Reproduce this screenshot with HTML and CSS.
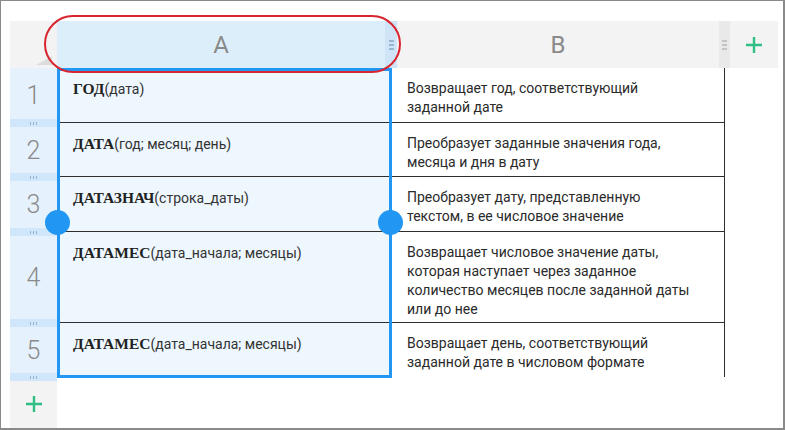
FILE: index.html
```html
<!DOCTYPE html>
<html lang="ru">
<head>
<meta charset="utf-8">
<title>Таблица</title>
<link rel="stylesheet" href="styles.css">
</head>
<body>
<div class="frame">
  <div class="sheet">
    <div class="header">
      <div class="corner"><span class="tri"></span></div>
      <div class="colhead sel">
        <span class="label">A</span>
        <span class="handle"><i></i><i></i><i></i></span>
      </div>
      <div class="colhead">
        <span class="label">B</span>
        <span class="handle"><i></i><i></i><i></i></span>
      </div>
      <div class="addcol">
        <svg class="plus" width="18" height="18" viewBox="0 0 18 18"><path d="M9 1v16M1 9h16"/></svg>
      </div>
    </div>
    <div class="body">
      <div class="rowheads">
        <div class="num n1">1</div>
        <div class="band"><i></i><i></i><i></i></div>
        <div class="num n2">2</div>
        <div class="band"><i></i><i></i><i></i></div>
        <div class="num n3">3</div>
        <div class="band"><i></i><i></i><i></i></div>
        <div class="num n4">4</div>
        <div class="band"><i></i><i></i><i></i></div>
        <div class="num n5">5</div>
        <div class="band"><i></i><i></i><i></i></div>
        <div class="addrow">
          <svg class="plus" width="18" height="18" viewBox="0 0 18 18"><path d="M9 1v16M1 9h16"/></svg>
        </div>
      </div>
      <div class="grid">
        <div class="row r1">
          <div class="cell a"><b>ГОД</b>(дата)</div>
          <div class="cell b">Возвращает год, соответствующий<br>заданной дате</div>
        </div>
        <div class="row r2">
          <div class="cell a"><b>ДАТА</b>(год; месяц; день)</div>
          <div class="cell b">Преобразует заданные значения года,<br>месяца и дня в дату</div>
        </div>
        <div class="row r3">
          <div class="cell a"><b>ДАТАЗНАЧ</b>(строка_даты)</div>
          <div class="cell b">Преобразует дату, представленную<br>текстом, в ее числовое значение</div>
        </div>
        <div class="row r4">
          <div class="cell a"><b>ДАТАМЕС</b>(дата_начала; месяцы)</div>
          <div class="cell b">Возвращает числовое значение даты,<br>которая наступает через заданное<br>количество месяцев после заданной даты<br>или до нее</div>
        </div>
        <div class="row r5">
          <div class="cell a"><b>ДАТАМЕС</b>(дата_начала; месяцы)</div>
          <div class="cell b">Возвращает день, соответствующий<br>заданной дате в числовом формате</div>
        </div>
      </div>
    </div>
    <div class="selection"></div>
    <span class="knob left"></span>
    <span class="knob right"></span>
    <div class="callout"></div>
  </div>
</div>
</body>
</html>
```
FILE: styles.css
```css
* { box-sizing: border-box; }
html, body { margin: 0; padding: 0; background: #fff; }
.frame {
  width: 785px;
  height: 430px;
  border: 1px solid #8a8a8a;
  border-right-width: 2px;
  border-bottom-width: 2px;
  padding: 20px 0 0 9px;
  background: #fff;
  font-family: Roboto, "Noto Sans", sans-serif;
  overflow: hidden;
}
.sheet { position: relative; height: 100%; display: flex; flex-direction: column; }

/* header */
.header { display: flex; height: 47px; flex: none; }
.corner {
  width: 47px; background: #f3f3f3;
  display: flex; align-items: flex-end; justify-content: flex-end;
  padding: 0 5px 3px 0;
}
.tri {
  width: 0; height: 0;
  border-left: 16px solid transparent;
  border-bottom: 9px solid #dcdcdc;
}
.colhead {
  width: 333px; background: #f3f3f3;
  display: flex; align-items: stretch;
}
.colhead.sel { width: 340px; background: #ddeefb; }
.colhead .label {
  flex: 1; display: flex; align-items: center; justify-content: center;
  font-size: 24px; color: #8a8a8a; font-weight: 400;
}
.colhead .handle {
  width: 11px; background: #e9e9e9;
  display: flex; flex-direction: column; align-items: center; justify-content: center; gap: 2px;
}
.colhead.sel .handle { width: 12px; background: #cfe4f6; }
.handle i { display: block; width: 5px; height: 2px; background: #c3c3c3; }
.colhead.sel .handle i { background: #97b6d0; }
.addcol {
  width: 48px; background: #f3f3f3;
  display: flex; align-items: center; justify-content: center;
}
.plus path { stroke: #2fbe84; stroke-width: 2.4; fill: none; }

/* body */
.body { display: flex; flex: 1; }
.rowheads { width: 47px; display: flex; flex-direction: column; flex: none; }
.num {
  background: #e5f2fd; color: #8a8a8a;
  font-size: 25px; font-weight: 300;
  display: flex; align-items: center; justify-content: center;
}
.n1 { height: 51px; padding-top: 4px; }
.n2 { height: 46px; }
.n3 { height: 47px; }
.n4 { height: 83px; }
.n5 { height: 46px; }
.band {
  height: 8px; background: #d0e7fb;
  display: flex; align-items: center; justify-content: center; gap: 2px;
}
.band i { display: block; width: 1px; height: 3px; background: #93b3cf; }
.addrow {
  flex: 1; background: #f3f3f3;
  display: flex; align-items: center; justify-content: center;
  padding-bottom: 2px;
}

.grid { width: 668px; display: flex; flex-direction: column; }
.row { display: flex; border-bottom: 1px solid #2e2e2e; }
.row:last-child { border-bottom: none; }
.r1 { height: 55px; }
.r2 { height: 54px; }
.r3 { height: 55px; }
.r4 { height: 91px; }
.r5 { height: 54px; }
.cell { padding-top: 11px; font-size: 14px; line-height: 19px; color: #2a2a2a; }
.cell.a { width: 333px; background: #eef7fe; padding-left: 16px; color: #333; }
.cell.a b { font-family: "Liberation Serif", serif; font-weight: 700; font-size: 15.5px; color: #222; }
.cell.b {
  width: 335px; padding-left: 16px;
  border-left: 1px solid #2e2e2e; border-right: 1px solid #2e2e2e;
}

/* overlays */
.selection {
  position: absolute; left: 47px; top: 47px;
  width: 335px; height: 310px;
  border: 3px solid #2196f3;
  pointer-events: none;
}
.knob {
  position: absolute; top: 189px;
  width: 25px; height: 25px; border-radius: 50%;
  background: #2196f3;
}
.knob.left { left: 35px; }
.knob.right { left: 368px; }
.callout {
  position: absolute; left: 34px; top: -6px;
  width: 357px; height: 58px;
  border: 2.5px solid #d82530;
  border-radius: 29px;
}
```
